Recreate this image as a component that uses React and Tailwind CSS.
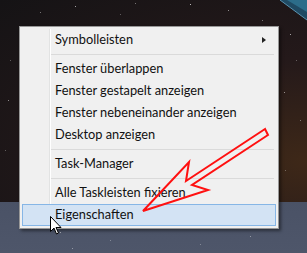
import React from "react";

const STARS = [
    [8, 100, 0.5], [40, 12, 0.4], [75, 6, 0.6], [120, 14, 0.3], [190, 4, 0.7], [228, 10, 0.5],
    [262, 20, 0.4], [290, 34, 0.6], [296, 60, 0.3], [284, 92, 0.5], [300, 120, 0.4], [5, 150, 0.3],
    [10, 60, 0.3], [285, 170, 0.3], [60, 232, 0.5], [72, 248, 0.4], [110, 240, 0.3], [200, 244, 0.3],
    [250, 236, 0.4], [135, 3, 0.4],
];

const MenuItem = ({ label, sub, active }) => (
    <div
        className={`relative flex items-center h-[22px] pl-[33px] pr-3 ${
            active ? "bg-[#d3e3f4] border border-[#86b6e6]" : ""
        }`}
    >
        <span className={active ? "-ml-px" : ""}>{label}</span>
        {sub && (
            <span className="absolute right-[10px] top-[8px] w-0 h-0 border-y-[3.5px] border-y-transparent border-l-[4px] border-l-[#222]" />
        )}
    </div>
);

const Separator = () => (
    <div className="h-[7px] flex items-center pl-[28px] pr-[2px]">
        <div className="h-px w-full bg-[#dadada]" />
    </div>
);

const App = () => {
    return (
        <div
            className="relative w-[307px] h-[253px] overflow-hidden"
            style={{ fontFamily: "Lato, 'Noto Sans', sans-serif" }}
        >
            {/* desktop + taskbar */}
            <div className="flex flex-col h-full">
                <div className="h-[202px] bg-[radial-gradient(ellipse_at_100%_80%,#3e2818_0%,#24191a_45%,#151315_100%)]" />
                <div className="flex-1 bg-gradient-to-b from-[#4a5266] to-[#4e566a]" />
            </div>

            {/* stars */}
            {STARS.map(([x, y, o], i) => (
                <div
                    key={i}
                    className="absolute w-px h-px bg-white"
                    style={{ left: x, top: y, opacity: o }}
                />
            ))}

            {/* top right corner shape */}
            <svg className="absolute top-0 right-0" width="30" height="22" viewBox="0 0 30 22">
                <polygon points="3,0 30,0 30,20" fill="#1f4a63" />
                <polygon points="10,0 30,0 30,12" fill="#2c6d8a" />
                <polyline points="3,0 30,20" stroke="#5a93b0" strokeWidth="1" fill="none" />
            </svg>

            {/* context menu */}
            <div className="absolute left-[19px] top-[26px] w-[260px] border border-[#979797] bg-[#f0f0f0] p-[2px] text-[12.8px] text-[#111] shadow-[2px_2px_3px_rgba(0,0,0,0.45)]">
                <div className="absolute left-[29px] top-[2px] bottom-[2px] w-px bg-[#e2e3e3]" />
                <div className="absolute left-[30px] top-[2px] bottom-[2px] w-px bg-white" />
                <MenuItem label="Symbolleisten" sub />
                <Separator />
                <MenuItem label="Fenster überlappen" />
                <MenuItem label="Fenster gestapelt anzeigen" />
                <MenuItem label="Fenster nebeneinander anzeigen" />
                <MenuItem label="Desktop anzeigen" />
                <Separator />
                <MenuItem label="Task-Manager" />
                <Separator />
                <MenuItem label="Alle Taskleisten fixieren" />
                <MenuItem label="Eigenschaften" active />
            </div>

            {/* red annotation arrow */}
            <svg className="absolute left-0 top-0" width="307" height="253" viewBox="0 0 307 253">
                <polygon
                    points="265,129 186,181 189,162 143,211 208,190 192,185 268,135"
                    fill="none"
                    stroke="#ff1010"
                    strokeWidth="2"
                    strokeLinejoin="miter"
                />
            </svg>

            {/* mouse cursor */}
            <svg className="absolute left-[50px] top-[216px]" width="14" height="20" viewBox="0 0 14 20">
                <path
                    d="M0.5 0.5 L0.5 15.5 L4 12 L6.5 18 L8.5 17 L6 11.5 L11 11.5 Z"
                    fill="#fff"
                    stroke="#000"
                    strokeWidth="1"
                    strokeLinejoin="round"
                />
            </svg>
        </div>
    );
};

export default App;
